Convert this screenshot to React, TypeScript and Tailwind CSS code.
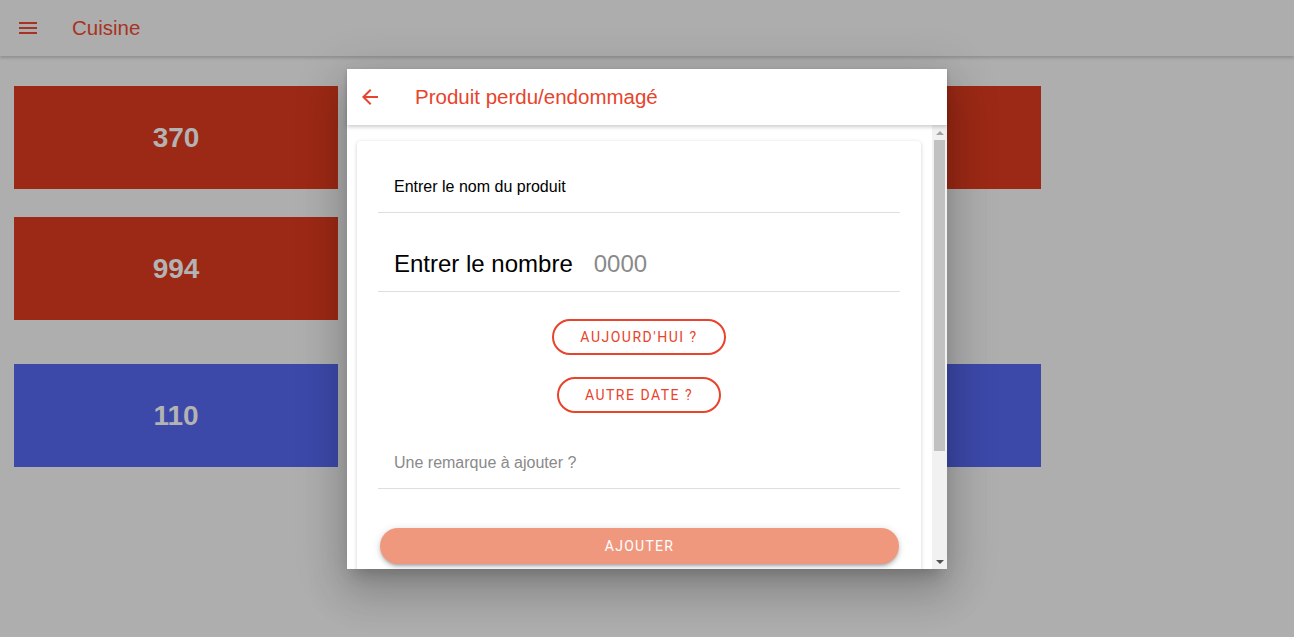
//modules
import React from 'react';

//icons
//----------------------------------------------------------------------

function MenuIcon() {
  return (
    <svg width="24" height="24" viewBox="0 0 24 24" fill="#a83323">
      <path d="M3 18h18v-2H3v2zm0-5h18v-2H3v2zm0-7v2h18V6H3z" />
    </svg>
  );
}

function BackIcon() {
  return (
    <svg width="24" height="24" viewBox="0 0 24 24" fill="#e8432c">
      <path d="M20 11H7.83l5.59-5.59L12 4l-8 8 8 8 1.41-1.41L7.83 13H20v-2z" />
    </svg>
  );
}

//tiles
//----------------------------------------------------------------------

function Tile({ value, blue }: { value?: string; blue?: boolean }) {
  return (
    <div
      className={`w-[324px] h-[103px] flex items-center justify-center 
      ${blue ? 'bg-[#3d49a9]' : 'bg-[#9c2915]'}`}
    >
      <span className="text-[28px] font-bold text-[#b3b3b3]">{value}</span>
    </div>
  );
}

//scrollbar drawn by hand (headless hides the native one)
//----------------------------------------------------------------------

function ScrollBar() {
  return (
    <div className="w-[15px] shrink-0 bg-[#f1f1f1] flex flex-col items-center">
      <div className="h-[15px] flex items-center justify-center">
        <div className="w-0 h-0 border-x-[4px] border-x-transparent border-b-[4px] border-b-[#a3a3a3]" />
      </div>
      <div className="w-[11px] h-[311px] bg-[#c1c1c1] mt-0" />
      <div className="flex-1" />
      <div className="h-[15px] flex items-center justify-center">
        <div className="w-0 h-0 border-x-[4px] border-x-transparent border-t-[4px] border-t-[#505050]" />
      </div>
    </div>
  );
}

//----------------------------------------------------------------------

export default function App() {
  return (
    <div
      className="relative w-[1294px] h-[637px] overflow-hidden bg-[#aeaeae]"
      style={{ fontFamily: '"Liberation Sans", Arial, sans-serif' }}
    >
      {/* Toolbar */}
      <header className="h-[56px] flex items-center bg-[#adadad] 
      shadow-[0_2px_3px_rgba(0,0,0,0.18)] relative z-10">
        <div className="ml-[16px] flex">
          <MenuIcon />
        </div>
        <h1 className="ml-[32px] text-[20.5px] text-[#a83323]">Cuisine</h1>
      </header>

      {/* Tiles */}
      <div className="pt-[30px] pl-[14px] flex flex-col">
        <div className="flex gap-[379px]">
          <Tile value="370" />
          <Tile />
        </div>
        <div className="flex mt-[28px]">
          <Tile value="994" />
        </div>
        <div className="flex gap-[379px] mt-[44px]">
          <Tile value="110" blue />
          <Tile blue />
        </div>
      </div>

      {/* Dialog */}
      <div
        className="absolute left-[347px] top-[69px] w-[600px] h-[500px] bg-white 
        flex flex-col z-20 shadow-[0_11px_15px_-7px_rgba(0,0,0,0.2),0_24px_38px_3px_rgba(0,0,0,0.14),0_9px_46px_8px_rgba(0,0,0,0.12)]"
      >
        <div className="h-[56px] shrink-0 flex items-center bg-white relative z-10 
        shadow-[0_2px_4px_rgba(0,0,0,0.2)]">
          <div className="ml-[11px] flex">
            <BackIcon />
          </div>
          <h2 className="ml-[33px] text-[20.5px] text-[#e8432c]">
            Produit perdu/endommagé
          </h2>
        </div>

        <div className="flex-1 flex min-h-0">
          <div className="flex-1 overflow-hidden bg-white pl-[10px] pr-[11px] pt-[16px]">
            <div className="rounded-[4px] bg-white px-[21px] pt-[20px] pb-[145px] 
            shadow-[0_1px_4px_rgba(0,0,0,0.18)]">
              {/* Product name */}
              <div className="h-[52px] flex items-center pl-[16px] border-b border-[#dedede]">
                <span className="text-[16px] text-black">Entrer le nom du produit</span>
              </div>

              {/* Number */}
              <div className="mt-[23px] h-[56px] flex items-center pl-[16px] border-b border-[#dedede]">
                <span className="text-[24px] text-black">Entrer le nombre</span>
                <span className="ml-[21px] text-[24px] text-[#8a8a8a]">0000</span>
              </div>

              {/* Date buttons */}
              <div
                className="flex flex-col items-center mt-[27px] gap-[22px]"
                style={{ fontFamily: 'Roboto, "Liberation Sans", sans-serif' }}
              >
                <button className="h-[36px] px-[26px] rounded-full border-2 border-[#e8432c] 
                text-[14px] tracking-[1.5px] text-[#e8432c]">
                  AUJOURD'HUI ?
                </button>
                <button className="h-[36px] px-[26px] rounded-full border-2 border-[#e8432c] 
                text-[14px] tracking-[1.5px] text-[#e8432c]">
                  AUTRE DATE ?
                </button>
              </div>

              {/* Remark */}
              <div className="mt-[24px] h-[52px] flex items-center pl-[16px] border-b border-[#dedede]">
                <span className="text-[16px] text-[#8a8a8a]">Une remarque à ajouter ?</span>
              </div>

              {/* Submit */}
              <button
                className="mt-[39px] mx-[2px] w-[519px] h-[36px] rounded-full bg-[#f0987e] 
                text-white text-[14px] tracking-[1.25px] 
                shadow-[0_3px_3px_-2px_rgba(0,0,0,0.2),0_3px_4px_0_rgba(0,0,0,0.14),0_1px_8px_0_rgba(0,0,0,0.12)]"
                style={{ fontFamily: 'Roboto, "Liberation Sans", sans-serif' }}
              >
                AJOUTER
              </button>
            </div>
          </div>
          <ScrollBar />
        </div>
      </div>
    </div>
  );
}
